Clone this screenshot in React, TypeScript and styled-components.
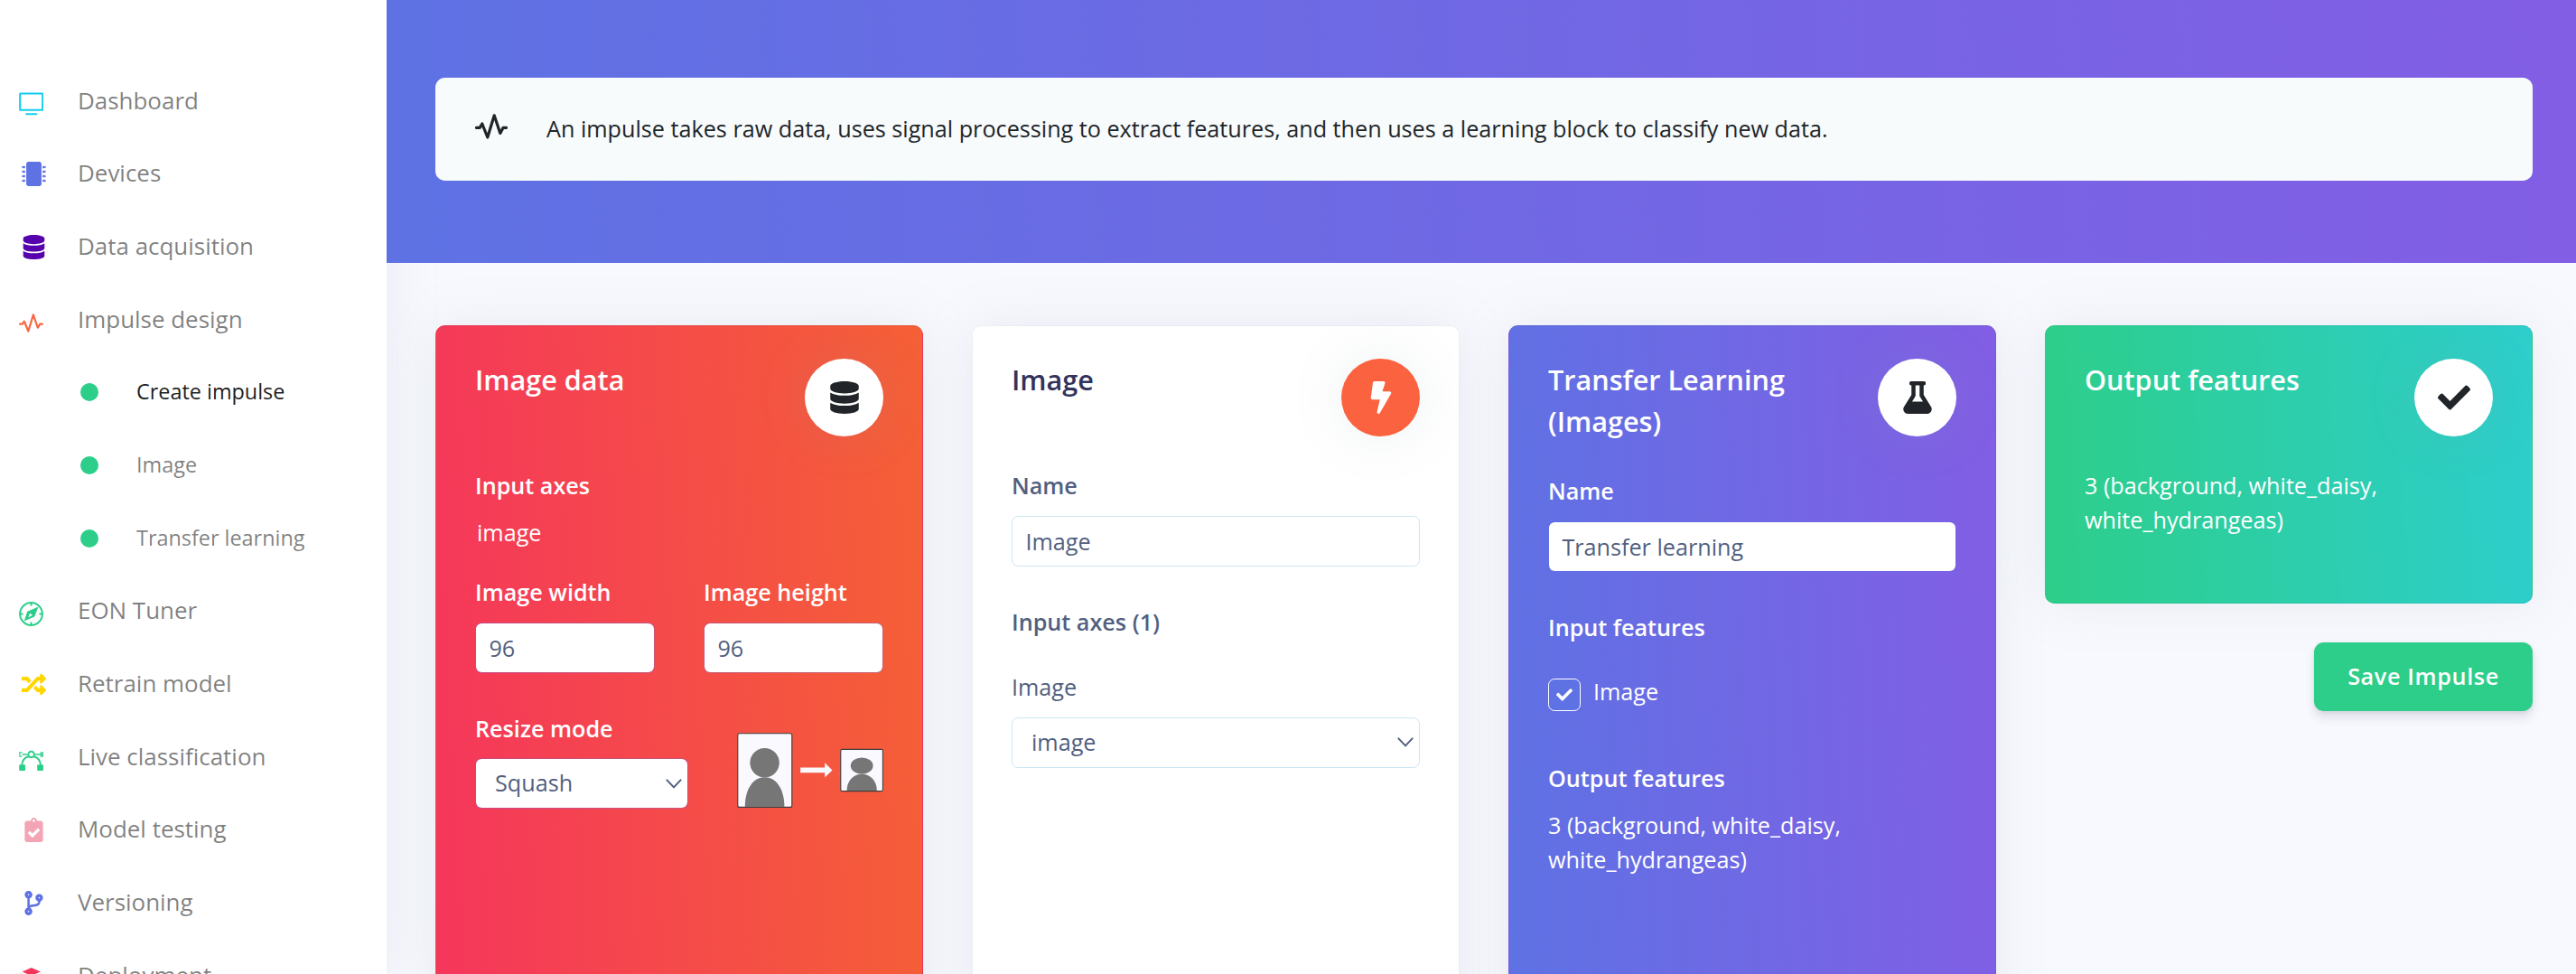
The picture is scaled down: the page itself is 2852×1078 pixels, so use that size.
import React from "react";
import styled, { createGlobalStyle, css } from "styled-components";
import {
  FaBolt,
  FaCheck,
  FaClipboardCheck,
  FaCodeBranch,
  FaDatabase,
  FaFlask,
  FaMicrochip,
  FaRandom,
} from "react-icons/fa";

const GlobalStyle = createGlobalStyle`
  *, *::before, *::after { box-sizing: border-box; }
  html, body { margin: 0; padding: 0; }
  body {
    background: #f8f9fe;
    font-family: "Open Sans", "Noto Sans", sans-serif;
    font-size: 25.2px;
    line-height: 37.8px;
    color: #525f7f;
    overflow: hidden;
  }
`;

const softShadow = "0 0 57.6px rgba(136, 152, 170, 0.15)";

const gradients = {
  red: "linear-gradient(87deg, #f5365c 0%, #f56036 100%)",
  indigo: "linear-gradient(87deg, #5e72e4 0%, #825ee4 100%)",
  green: "linear-gradient(87deg, #2dce89 0%, #2dcecc 100%)",
};

type Tone = "red" | "white" | "indigo" | "green";

const Page = styled.div`
  display: flex;
  height: 1078px;
  overflow: hidden;
`;

/* ---------- Sidebar ---------- */

const Sidebar = styled.nav`
  flex: none;
  width: 428px;
  height: 1078px;
  padding-top: 71.4px;
  background: #fff;
  box-shadow: ${softShadow};
  overflow: hidden;
`;

const NavItem = styled.a`
  display: flex;
  align-items: center;
  height: 80.66px;
  padding-left: 21px;
  font-size: 25.95px;
  color: rgba(0, 0, 0, 0.5);
  white-space: nowrap;
`;

const NavIcon = styled.span<{ $color: string; $font?: boolean }>`
  display: flex;
  align-items: center;
  width: 65px;
  height: 27px;
  color: ${(p) => p.$color};
  ${(p) =>
    p.$font
      ? css`
          padding-left: 3px;
          margin-top: 1px;
        `
      : css`
          margin-top: 7px;
        `}
  svg {
    height: 27px;
    width: auto;
    flex: none;
  }
`;

const SubItem = styled.a<{ $active?: boolean }>`
  display: flex;
  align-items: center;
  gap: 42px;
  height: 80.66px;
  padding-left: 89px;
  font-size: 23.4px;
  color: ${(p) => (p.$active ? "rgba(0, 0, 0, 0.9)" : "rgba(0, 0, 0, 0.5)")};
`;

const Dot = styled.span`
  width: 20px;
  height: 20px;
  border-radius: 50%;
  background: #2dce89;
`;

/* ---------- Main ---------- */

const Main = styled.main`
  flex: 1;
  min-width: 0;
`;

const Hero = styled.header`
  position: relative;
  height: 291px;
  padding: 86px 48px 0 54px;
  background: ${gradients.indigo};
`;

const Banner = styled.div`
  display: flex;
  align-items: center;
  height: 114px;
  padding-left: 44px;
  border-radius: 10.8px;
  background: #f7fbfc;
  color: #212529;
`;

const BannerIcon = styled.span`
  display: flex;
  width: 79px;
  margin-top: -6px;
  svg {
    width: 36px;
    height: 28px;
  }
`;

const Blocks = styled.section`
  display: grid;
  grid-template-columns: repeat(4, 540px);
  column-gap: 54px;
  padding: 69px 48px 0 54px;
`;

const Card = styled.article<{ $tone: Tone; $tall?: boolean }>`
  height: ${(p) => (p.$tall ? "800px" : "308px")};
  padding: 36px 43px;
  border: 1px solid ${(p) => (p.$tone === "white" ? "rgba(0, 0, 0, 0.02)" : "rgba(0, 0, 0, 0.05)")};
  border-radius: 10.8px;
  background: ${(p) => (p.$tone === "white" ? "#fff" : gradients[p.$tone])};
  background-clip: ${(p) => (p.$tone === "white" ? "padding-box" : "border-box")};
  box-shadow: ${softShadow};
  color: ${(p) => (p.$tone === "white" ? "#525f7f" : "#fff")};
`;

const CardHead = styled.div`
  display: flex;
  justify-content: space-between;
  align-items: flex-start;
  margin-bottom: 36px;
`;

const Title = styled.h3<{ $dark?: boolean }>`
  margin: 0;
  max-width: 330px;
  font-size: 30.6px;
  line-height: 46px;
  font-weight: 600;
  color: ${(p) => (p.$dark ? "#32325d" : "#fff")};
`;

const Badge = styled.span<{ $accent?: boolean }>`
  display: flex;
  align-items: center;
  justify-content: center;
  flex: none;
  width: 87px;
  height: 86px;
  border-radius: 50%;
  background: ${(p) => (p.$accent ? "#fb6340" : "#fff")};
  color: ${(p) => (p.$accent ? "#fff" : "#212529")};
  box-shadow: ${softShadow};
  font-size: 36px;
`;

const Label = styled.div`
  font-weight: 600;
`;

const Plain = styled.div<{ $top: number; $indent?: number }>`
  margin-top: ${(p) => p.$top}px;
  padding-left: ${(p) => p.$indent ?? 0}px;
`;

const Field = styled.div<{ $top?: number; $width?: string }>`
  margin-top: ${(p) => p.$top ?? 0}px;
  width: ${(p) => p.$width ?? "auto"};
`;

const boxStyles = css<{ $outlined?: boolean }>`
  width: 100%;
  height: 56px;
  margin-top: 14px;
  border: 1px solid ${(p) => (p.$outlined ? "#cbe6f3" : "rgba(94, 114, 228, 0.3)")};
  border-radius: 7.2px;
  background: #fff;
  background-clip: padding-box;
  color: #525f7f;
  font: inherit;
`;

const Input = styled.input<{ $outlined?: boolean }>`
  ${boxStyles}
  display: block;
  padding: 0 14.4px;
  outline: none;
`;

const Select = styled.div<{ $outlined?: boolean }>`
  ${boxStyles}
  display: flex;
  align-items: center;
  justify-content: space-between;
  padding: 0 6px 0 21px;
`;

const TwoUp = styled.div`
  display: grid;
  grid-template-columns: 1fr 1fr;
  column-gap: 54px;
  margin-top: 28px;
  input {
    margin-top: 15px;
  }
`;

const ResizeRow = styled.div`
  display: flex;
  justify-content: space-between;
  align-items: flex-start;
  margin-top: 42.2px;
  > svg {
    margin-top: 23px;
    flex: none;
  }
`;

const CheckRow = styled.label`
  display: flex;
  align-items: flex-start;
  gap: 14px;
  margin-top: 33px;
`;

const CheckBox = styled.span`
  display: flex;
  align-items: center;
  justify-content: center;
  width: 36px;
  height: 36px;
  margin-top: 4px;
  border: 1px solid #fff;
  border-radius: 7.2px;
  background: #5e72e4;
`;

const Output = styled.div`
  display: flex;
  flex-direction: column;
  align-items: flex-end;
  > article {
    width: 100%;
  }
`;

const SaveButton = styled.button`
  width: 242px;
  height: 76px;
  margin-top: 43px;
  padding: 0;
  border: 0;
  border-radius: 10.8px;
  background: #2dce89;
  color: #fff;
  font: inherit;
  font-weight: 600;
  letter-spacing: 0.63px;
  box-shadow: 0 7.2px 10.8px rgba(50, 50, 93, 0.11), 0 1.8px 5.4px rgba(0, 0, 0, 0.08);
`;

/* ---------- Drawings ---------- */

const Pulse = () => (
  <svg viewBox="0 0 36 28" fill="none" stroke="currentColor" strokeWidth="3.2" strokeLinejoin="round" strokeLinecap="round">
    <path d="M1.4 15.4H5.2L7.8 11L13.8 26L21.2 1.8L27.8 21.4L31 15.4H34.6" />
  </svg>
);

const PulseSmall = () => (
  <svg viewBox="0 -4 36 36" fill="none" stroke="currentColor" strokeWidth="2.9" strokeLinejoin="round" strokeLinecap="round">
    <path d="M1.4 15.4H5.2L7.8 11.4L13.8 26L21.2 1.8L27.8 21L31 15.4H34.6" />
  </svg>
);

const Screen = () => (
  <svg viewBox="0 0 27 27" fill="none" stroke="currentColor" strokeWidth="2.1">
    <rect x="1.2" y="1.5" width="25" height="18.3" rx="0.6" />
    <path d="M8.2 24.2H19.4" strokeLinecap="round" />
  </svg>
);

const Compass = () => (
  <svg viewBox="0 0 27 27" fill="none" stroke="currentColor" strokeWidth="2">
    <circle cx="13.5" cy="13.5" r="12.4" />
    <path d="M13.5 1V4.5M13.5 22.5V26M1 13.5H4.5M22.5 13.5H26" />
    <path
      d="M21.6 5.4L9.3 10.8L5.6 21.5L17.2 16.4ZM12.2 12.6L14.9 15L10.4 17.3Z"
      fill="currentColor"
      fillRule="evenodd"
      stroke="none"
    />
  </svg>
);

const Vector = () => (
  <svg viewBox="0 0 27 27" fill="none" stroke="currentColor" strokeWidth="1.9">
    <circle cx="13.6" cy="7" r="3.3" />
    <path d="M3.6 7H9.4M17.8 7H23.6" strokeWidth="1.6" />
    <path d="M3.2 19C3.6 13.6 6.4 10.2 10.8 9.2M24 19C23.6 13.6 20.8 10.2 16.4 9.2" />
    <path d="M3.4 4.9H0.8V9.1H3.4M23.8 4.9H26.4V9.1H23.8" strokeWidth="1.1" />
    <path d="M23.4 5.4H25.6V8.6H23.4Z" fill="currentColor" stroke="none" />
    <rect x="0.2" y="18.2" width="6.8" height="6.8" rx="1" fill="currentColor" stroke="none" />
    <rect x="20.2" y="18.2" width="6.8" height="6.8" rx="1" fill="currentColor" stroke="none" />
  </svg>
);

const Cube = () => (
  <svg viewBox="0 0 27 27" fill="currentColor">
    <path d="M13.7 1L24 5.6L13.7 9.8L3.6 5.6Z" />
    <path d="M2.2 7.4L12.6 11.8V26L2.2 21ZM25 7.4L14.8 11.8V26L25 21Z" />
  </svg>
);

const Chevron = () => (
  <svg width="18" height="11" viewBox="0 0 18 11" fill="none" stroke="#525f7f" strokeWidth="2" strokeLinecap="round" strokeLinejoin="round">
    <path d="M1.4 1.4L9 9.4L16.6 1.4" />
  </svg>
);

const SquashPreview = () => (
  <svg width="162" height="84" viewBox="0 0 162 84">
    <rect x="0.8" y="0.8" width="60" height="81.6" rx="2" fill="#f9f9ff" stroke="#3d3d3d" strokeWidth="1.1" />
    <circle cx="30.6" cy="33.3" r="16.2" fill="#767676" />
    <path d="M8.8 81.9C8.8 62 18 49.2 30.6 49.2S52.4 62 52.4 81.9Z" fill="#767676" />
    <path d="M70.2 38.6H97.2V33.3L105.5 41.5L97.2 49.6V44.2H70.2Z" fill="#f9f9ff" />
    <rect x="114.8" y="18.4" width="46.6" height="46.2" rx="1.6" fill="#f9f9ff" stroke="#3d3d3d" strokeWidth="1.1" />
    <ellipse cx="138.2" cy="36.6" rx="12.4" ry="9.2" fill="#767676" />
    <path d="M121.6 64C121.6 53 128.8 45.7 138.2 45.7S154.8 53 154.8 64Z" fill="#767676" />
  </svg>
);

/* ---------- Content ---------- */

type Item = { label: string; color?: string; icon?: React.ReactNode; font?: boolean; sub?: boolean; active?: boolean };

const items: Item[] = [
  { label: "Dashboard", color: "#11cdef", icon: <Screen /> },
  { label: "Devices", color: "#5e72e4", icon: <FaMicrochip />, font: true },
  { label: "Data acquisition", color: "#5603ad", icon: <FaDatabase />, font: true },
  { label: "Impulse design", color: "#fb6340", icon: <PulseSmall /> },
  { label: "Create impulse", sub: true, active: true },
  { label: "Image", sub: true },
  { label: "Transfer learning", sub: true },
  { label: "EON Tuner", color: "#2dce89", icon: <Compass /> },
  { label: "Retrain model", color: "#ffd600", icon: <FaRandom />, font: true },
  { label: "Live classification", color: "#2dce89", icon: <Vector /> },
  { label: "Model testing", color: "#f3a4b5", icon: <FaClipboardCheck />, font: true },
  { label: "Versioning", color: "#5e72e4", icon: <FaCodeBranch />, font: true },
  { label: "Deployment", color: "#f5365c", icon: <Cube /> },
];

export default function App() {
  return (
    <>
      <GlobalStyle />
      <Page>
        <Sidebar>
          {items.map((it) =>
            it.sub ? (
              <SubItem key={it.label} $active={it.active}>
                <Dot />
                {it.label}
              </SubItem>
            ) : (
              <NavItem key={it.label}>
                <NavIcon $color={it.color!} $font={it.font}>
                  {it.icon}
                </NavIcon>
                {it.label}
              </NavItem>
            )
          )}
        </Sidebar>
        <Main>
          <Hero>
            <Banner>
              <BannerIcon>
                <Pulse />
              </BannerIcon>
              An impulse takes raw data, uses signal processing to extract features, and then uses a learning block to
              classify new data.
            </Banner>
          </Hero>
          <Blocks>
            <Card $tone="red" $tall>
              <CardHead>
                <Title>Image data</Title>
                <Badge>
                  <FaDatabase />
                </Badge>
              </CardHead>
              <Label>Input axes</Label>
              <Plain $top={14} $indent={2}>
                image
              </Plain>
              <TwoUp>
                <Field>
                  <Label>Image width</Label>
                  <Input defaultValue="96" />
                </Field>
                <Field>
                  <Label>Image height</Label>
                  <Input defaultValue="96" />
                </Field>
              </TwoUp>
              <ResizeRow>
                <Field $width="236px">
                  <Label>Resize mode</Label>
                  <Select>
                    Squash
                    <Chevron />
                  </Select>
                </Field>
                <SquashPreview />
              </ResizeRow>
            </Card>

            <Card $tone="white" $tall>
              <CardHead>
                <Title $dark>Image</Title>
                <Badge $accent>
                  <FaBolt />
                </Badge>
              </CardHead>
              <Field>
                <Label>Name</Label>
                <Input $outlined defaultValue="Image" />
              </Field>
              <Field $top={43}>
                <Label>Input axes (1)</Label>
              </Field>
              <Field $top={34.5}>
                <div>Image</div>
                <Select $outlined>
                  image
                  <Chevron />
                </Select>
              </Field>
            </Card>

            <Card $tone="indigo" $tall>
              <CardHead>
                <Title>Transfer Learning (Images)</Title>
                <Badge>
                  <FaFlask />
                </Badge>
              </CardHead>
              <Field>
                <Label>Name</Label>
                <Input defaultValue="Transfer learning" />
              </Field>
              <Field $top={43.4}>
                <Label>Input features</Label>
                <CheckRow>
                  <CheckBox>
                    <FaCheck size={18} />
                  </CheckBox>
                  Image
                </CheckRow>
              </Field>
              <Field $top={55.6}>
                <Label>Output features</Label>
                <Plain $top={14.4}>3 (background, white_daisy, white_hydrangeas)</Plain>
              </Field>
            </Card>

            <Output>
              <Card $tone="green">
                <CardHead>
                  <Title>Output features</Title>
                  <Badge>
                    <FaCheck />
                  </Badge>
                </CardHead>
                <Plain $top={0}>3 (background, white_daisy, white_hydrangeas)</Plain>
              </Card>
              <SaveButton>Save Impulse</SaveButton>
            </Output>
          </Blocks>
        </Main>
      </Page>
    </>
  );
}
